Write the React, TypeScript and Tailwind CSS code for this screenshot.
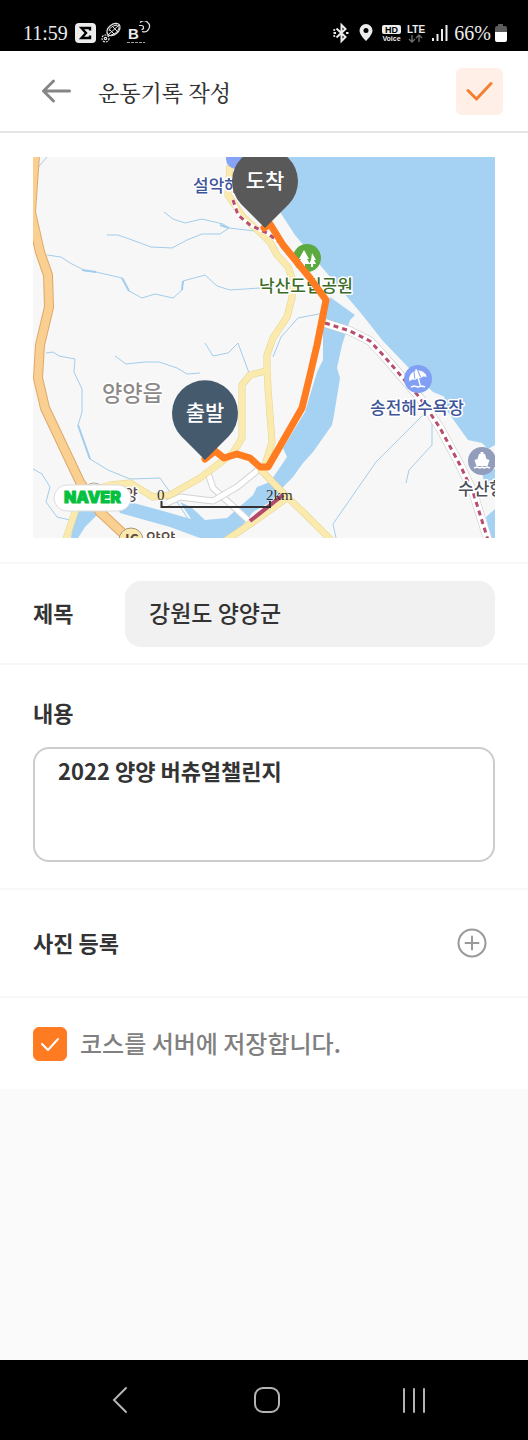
import { useState } from "react";

const SERIF = "font-['Liberation_Serif','Noto_Serif_CJK_KR','Noto_Sans_CJK_KR',serif]";

function StatusBar() {
  return (
    <div className={`flex h-[51px] shrink-0 items-center justify-between bg-black pt-[15px] pl-[23px] pr-[21px] text-[#ececec] ${SERIF}`}>
      <div className="flex items-center">
        <span className="text-[20px] leading-6">11:59</span>
        <svg width="76" height="24" viewBox="0 0 76 24" className="ml-[7px]" aria-hidden="true">
          <rect x="0" y="2" width="21" height="20" rx="4" fill="#ececec" />
          <path d="M15 9.500V7H6.500l4.500 5-4.500 5H15v-2.500" fill="none" stroke="#000" strokeWidth="2.400" />
          <g fill="none" stroke="#e4e4e4" strokeWidth="1.200">
            <ellipse cx="38.500" cy="8.500" rx="7.500" ry="5" transform="rotate(-40 38.500 8.500)" />
            <path d="M33 14 44 4M35 9l5 5M38 6l5 5M41 3.500l4 4M34 10q1-5 8-6M36 14q6-1 8-7" strokeWidth="1" />
            <circle cx="30.500" cy="17.500" r="3.500" strokeDasharray="2 1" />
            <circle cx="30.500" cy="17.500" r="1.200" />
            <path d="M65 1.500a5.500 5.500 0 1 1 2 9" />
            <path d="M64 4.500h2.500a2 2 0 0 1 0 4" />
            <path d="M52 21.500h18" strokeDasharray="3 1" opacity=".7" />
          </g>
          <text x="53" y="17.500" fontSize="15" fontWeight="700" fill="#ececec" fontFamily="Liberation Sans, sans-serif">B</text>
        </svg>
      </div>
      <div className="flex items-center">
        <svg width="118" height="24" viewBox="0 0 118 24" aria-hidden="true">
          <g fill="none" stroke="#ececec" strokeWidth="2">
            <path d="m4.500 7.500 9 8.500-4 4V4l4 4-9 8.500" />
            <path d="M1.500 12h2.500M14 12h2.500M1.500 8.500l1.500 1M1.500 15.500l1.500-1" />
          </g>
          <path fillRule="evenodd" d="M34 3a6.500 6.500 0 0 0-6.500 6.500C27.500 14 34 20 34 20s6.500-6 6.500-10.500A6.500 6.500 0 0 0 34 3Zm0 4a2.500 2.500 0 1 1 0 5 2.500 2.500 0 0 1 0-5Z" fill="#ececec" />
          <rect x="50" y="4" width="19" height="9" rx="2" fill="#ececec" />
          <g fontFamily="Liberation Sans, sans-serif" fontWeight="700" textAnchor="middle">
            <text x="59.500" y="11.500" fontSize="9" fill="#000">HD</text>
            <text x="59.500" y="20" fontSize="7" fill="#ececec">Voice</text>
            <text x="84" y="11.500" fontSize="10" fill="#ececec">LTE</text>
          </g>
          <g fill="none" stroke="#6a6a6a" strokeWidth="1.400">
            <path d="M80 14v7m-3-3 3 3 3-3M87 21v-7m-3 3 3-3 3 3" />
          </g>
          <path d="M101 20v-3M105.500 20v-7M110 20V8M114.500 20V4" stroke="#ececec" strokeWidth="2" />
        </svg>
        <span className="ml-1 text-[20px] leading-6">66%</span>
        <svg width="12" height="18" viewBox="0 0 12 18" className="ml-1" aria-hidden="true">
          <path d="M3 2V0h5v2h2a2 2 0 0 1 2 2v5H0V4a2 2 0 0 1 2-2Z" fill="#5c5c5c" />
          <path d="M0 8h12v8a2 2 0 0 1-2 2H2a2 2 0 0 1-2-2Z" fill="#fff" />
        </svg>
      </div>
    </div>
  );
}

function Header() {
  return (
    <header className="flex h-[82px] shrink-0 items-center border-b-2 border-[#e5e5e5] pl-[41px] pr-[25px]">
      <button type="button" aria-label="뒤로">
        <svg width="31" height="26" viewBox="0 0 31 26" fill="none" stroke="#868686" strokeWidth="3" strokeLinecap="round" strokeLinejoin="round">
          <path d="M28.500 13H2.500M12.500 3 2.500 13l10 10" />
        </svg>
      </button>
      <h1 className="ml-[26px] flex-1 pt-0.5 font-['Noto_Serif_CJK_KR','Noto_Sans_CJK_KR',serif] text-[22px] leading-8 font-medium text-[#333]">
        운동기록 작성
      </h1>
      <button type="button" aria-label="저장" className="flex size-[47px] items-center justify-center rounded-md bg-[#ffefe6]">
        <svg width="27" height="20" viewBox="0 0 27 20" fill="none" stroke="#f47f30" strokeWidth="3" strokeLinecap="round" strokeLinejoin="round">
          <path d="m2 9.500 8.500 8.500L25 2.500" />
        </svg>
      </button>
    </header>
  );
}

const YELLOW_ROADS = [
  "M197 8 195 38 210 60 232 80 237 85 244 98 255 110 259 121V141L254 160 240 181 234 198V210L235 231 239 285 232 308",
  "M237 213 217 218 209 228V281L200 296 167 321 137 338 120 340 97 326 77 328 52 335 42 355 32 385",
  "M227 312 254 340 270 355 299 384",
  "M192 384 220 365 254 341",
];

const WHITE_ROADS = [
  "M174 313 180 331 215 363",
  "M134 346 147 340 180 344 204 330 225 313",
];

const STREAMS = [
  "M131 55 140 62 152 66 169 62 190 67 196 71 222 74",
  "M74 78 85 78 102 84 118 90 139 91 154 83 169 77 187 77 196 71",
  "M14 98 28 100 37 106 53 114 63 115 89 121 96 134 109 141 122 137 140 141 149 133 150 124 172 118 184 129 197 133 227 131",
  "M1 15 14 0M172 186 180 199 195 196 205 186 216 216",
  "M13 196 20 195 26 199 42 202 41 215 49 232V255L45 268 57 302 75 313 97 322 127 321 144 345 157 365",
  "M82 199 93 207 112 205 126 205 144 211 154 217 167 216",
  "M0 312 9 317 17 330 13 345 24 360 37 363",
  "M291 156 265 161 248 180 240 200",
  "M391 257 343 305 300 367 303 381M399 252V288L376 313 373 326",
];

const COAST_RAIL = "M292 166 317 174 337 184 350 198 369 220 387 241 407 271 427 308 440 335 455 383";
const NORTH_RAIL = "M200 43 205 58 217 68 234 76 250 88";
const HIGHWAY = "M2-2-2 55 7 95 15 118 16 150 7 188 5 221 12 251 47 325 67 355 97 383";

type PinProps = { x: number; y: number; label: string; fill: string };

function Pin({ x, y, label, fill }: PinProps) {
  return (
    <g transform={`translate(${x} ${y})`}>
      <path d="M0 47-24 23A33 33 0 1 1 24 23Z" fill={fill} />
      <text y="7" textAnchor="middle" fontSize="21" fontWeight="500" fill="#fff">{label}</text>
    </g>
  );
}

function CourseMap() {
  return (
    <svg viewBox="0 0 462 381" className="block w-full" role="img" aria-label="코스 지도" fontFamily="Noto Sans CJK KR, sans-serif">
      <rect width="462" height="381" fill="#f7f7f7" />

      {/* sea and river */}
      <g fill="#a5d2f3">
        <path d="M232 0 247 55 262 78 287 108 327 155 350 184 374 209 400 235 412 240 407 244 435 283 449 286 455 292 462 288V0Z" />
        <path d="M449 316 462 312V332L452 328ZM453 360 462 352V381H458Z" />
        <path d="M297 140 322 158 317 163 309 188 304 211 307 221 301 258 299 268 280 295 270 306 260 320 252 328 237 345 220 355 200 381H167L137 370 87 356 80 340 97 345 130 354 158 362 147 345 158 350 172 363 194 361 220 338 224 330 237 325 254 300 250 291 272 255 284 215 290 203V165Z" />
        <path d="M42 354 60 350 70 352 52 370 45 381H38Z" />
      </g>
      <g fill="none" stroke="#a3cdeb" strokeLinejoin="round">
        {STREAMS.map((d) => (
          <path key={d} d={d} />
        ))}
        <path d="M49 113 63 115M89 121 96 134M149 133 150 124M45 268 57 302M187 68 196 71" strokeWidth="2" />
      </g>

      {/* roads */}
      <g fill="none" strokeLinejoin="round">
        {WHITE_ROADS.map((d) => (
          <g key={d}>
            <path d={d} stroke="#d3d3d3" strokeWidth="7" />
            <path d={d} stroke="#fff" strokeWidth="5" />
          </g>
        ))}
        {YELLOW_ROADS.map((d) => (
          <path key={d} d={d} stroke="#e6d493" strokeWidth="7" />
        ))}
        {YELLOW_ROADS.map((d) => (
          <path key={d} d={d} stroke="#fbeaae" strokeWidth="6" />
        ))}
        <path d="M217 364 250 338" stroke="#b34a6c" strokeWidth="4" />
        <path d={HIGHWAY} stroke="#dfa868" strokeWidth="10" />
        <path d={HIGHWAY} stroke="#f9d091" strokeWidth="8" />
        <path d={COAST_RAIL} stroke="#c8c8c8" strokeWidth="9" />
        <path d={COAST_RAIL} stroke="#fff" strokeWidth="8" />
        <path d={COAST_RAIL} stroke="#b84d6d" strokeWidth="3" strokeDasharray="5 4" />
        <path d={NORTH_RAIL} stroke="#fff" strokeWidth="4" />
        <path d={NORTH_RAIL} stroke="#b84d6d" strokeWidth="3" strokeDasharray="5 4" />
      </g>

      {/* places under the route */}
      <circle cx="203" cy="2" r="10" fill="#86a4f5" />
      <circle cx="274" cy="101" r="14" fill="#5caa41" />
      <path d="m271 93 5 9h-2l3 5h-5v3h-2v-3h-5l3-5h-2ZM279 96l4 7h-2l2 4h-3v3h-2v-3h-2l2-4Z" fill="#fff" />
      <circle cx="385" cy="222" r="14" fill="#819ff4" />
      <g transform="rotate(-15 385 222)">
        <path d="M376 222a9 8.500 0 0 1 18 0l-3.500-1-3 1-2.500-1-2.500 1-3-1Z" fill="#fff" />
        <path d="m383 214-1 7M387 214l1 7" stroke="#819ff4" />
        <path d="M385.500 212v17" stroke="#fff" strokeWidth="1.500" />
      </g>
      <path d="m378 230 3-1 4 1 4-1 3 1" fill="none" stroke="#fff" strokeWidth="1.500" />
      <circle cx="449" cy="304" r="14" fill="#929dbb" />
      <path d="M446 297h1.500v-2h3v2h1.500l1.500 5 3 1-2 6h-11l-2-6 3-1Z" fill="#fff" />
      <path d="m441 311 3-1 3 1 2-1 2 1 3-1 3 1" fill="none" stroke="#fff" strokeWidth="1.500" />
      <circle cx="98" cy="383" r="12" fill="#fbeaae" stroke="#a8957b" />
      <circle cx="61" cy="337" r="11" fill="#eee" stroke="#b5a89c" />
      <g stroke="#fff" strokeWidth="3" paintOrder="stroke" strokeLinejoin="round" fontWeight="500">
        <text x="160" y="35" fontSize="17" fill="#40549a">설악해</text>
        <text x="226" y="135" fontSize="17" fill="#3a6c28">낙산도립공원</text>
        <text x="337" y="257" fontSize="17" fill="#40549a">송전해수욕장</text>
        <text x="425" y="338" fontSize="17" fill="#4b4f5a">수산항</text>
        <text x="69" y="244" fontSize="22" fill="#8d8988">양양읍</text>
        <text x="91" y="343" fontSize="15" fill="#5a4a42">양</text>
        <text x="113" y="388" fontSize="16" fill="#5a4a42">양양</text>
      </g>
      <text x="92" y="388" fontSize="14" fill="#5a4a42" fontWeight="700">IC</text>

      {/* recorded course */}
      <path
        d="M172 302 182 294 191 301 204 297 217 301 227 310H235L269 251 277 218 284 188 293 143 277 121 250 88 237 67 231 71"
        fill="none"
        stroke="#ff7c20"
        strokeWidth="7"
        strokeLinecap="round"
        strokeLinejoin="round"
      />
      <Pin x={232} y={24} label="도착" fill="#595959" />
      <Pin x={172} y={256} label="출발" fill="#455a6d" />

      {/* provider logo and scale */}
      <rect x="21" y="328" width="77" height="26" rx="13" fill="#fff" stroke="#ddd" />
      <text x="31" y="346" fontSize="16" fontWeight="900" fill="#03c13f" stroke="#03c13f" fontFamily="Inter, sans-serif">NAVER</text>
      <path d="M128.500 344v6H237v-6" fill="none" stroke="#333" strokeWidth="2" />
      <g fontFamily="Liberation Serif, serif" fontSize="15" fill="#333">
        <text x="124" y="343">0</text>
        <text x="233" y="343">2km</text>
      </g>
    </svg>
  );
}

export default function App() {
  const [title, setTitle] = useState("강원도 양양군");
  const [content, setContent] = useState("2022 양양 버츄얼챌린지");
  const [saveCourse, setSaveCourse] = useState(true);

  return (
    <div className="flex min-h-screen flex-col bg-[#fafafa] font-['Noto_Sans_CJK_KR',sans-serif] text-[#333]">
      <StatusBar />

      <main className="bg-white">
        <Header />

        <div className="border-b-2 border-[#f8f8f8] px-[33px] py-6">
          <CourseMap />
        </div>

        <div className="flex items-center border-b-2 border-[#f8f8f8] px-[33px] pt-[17px] pb-4">
          <label htmlFor="title" className="w-[92px] pb-1 text-[22px] leading-8 font-bold">제목</label>
          <input
            id="title"
            value={title}
            onChange={(e) => setTitle(e.target.value)}
            className="h-[66px] min-w-0 flex-1 rounded-2xl bg-[#f1f1f1] px-6 pb-1 text-[23px] font-medium outline-none"
          />
        </div>

        <div className="border-b-2 border-[#f8f8f8] px-[33px] pt-[31px] pb-[26px]">
          <label htmlFor="content" className="block text-[22px] leading-8 font-bold">내용</label>
          <textarea
            id="content"
            value={content}
            onChange={(e) => setContent(e.target.value)}
            className="mt-[19px] block h-[115px] w-full resize-none rounded-2xl border-2 border-[#ccc] px-[23px] py-[5px] text-[22px] leading-8 font-bold outline-none"
          />
        </div>

        <div className="flex h-[108px] items-center justify-between border-b-2 border-[#f8f8f8] pl-[33px] pr-[41px]">
          <h2 className="pb-0.5 text-[22px] leading-8 font-bold">사진 등록</h2>
          <button type="button" aria-label="사진 추가">
            <svg width="30" height="30" viewBox="0 0 30 30" fill="none" stroke="#999" strokeWidth="2">
              <circle cx="15" cy="15" r="13.500" />
              <path d="M15 8.500v13M8.500 15h13" strokeLinecap="round" />
            </svg>
          </button>
        </div>

        <label className="flex h-[91px] items-center gap-[13px] px-[33px]">
          <span className="grid size-[34px] shrink-0 place-items-center">
            <input
              type="checkbox"
              checked={saveCourse}
              onChange={(e) => setSaveCourse(e.target.checked)}
              className="col-start-1 row-start-1 size-[34px] appearance-none rounded-md border border-[#ccc] checked:border-[#ff7b22] checked:bg-[#ff7b22]"
            />
            {saveCourse && (
              <svg width="20" height="16" viewBox="0 0 20 16" className="pointer-events-none col-start-1 row-start-1" fill="none" stroke="#fff" strokeWidth="2" strokeLinecap="round" strokeLinejoin="round">
                <path d="m2 8 6 6L18 3" />
              </svg>
            )}
          </span>
          <span className="pb-0.5 text-2xl font-medium text-[#808080]">코스를 서버에 저장합니다.</span>
        </label>
      </main>

      <nav className="mt-auto grid h-20 grid-cols-3 items-center bg-black pr-[41px] pl-[47px]">
        <button type="button" aria-label="이전" className="flex justify-center">
          <svg width="16" height="28" viewBox="0 0 16 28" fill="none" stroke="#b4b4b4" strokeWidth="2" strokeLinecap="round">
            <path d="M14 2 2 14l12 12" />
          </svg>
        </button>
        <button type="button" aria-label="홈" className="flex justify-center">
          <svg width="28" height="28" viewBox="0 0 28 28" fill="none" stroke="#b4b4b4" strokeWidth="2">
            <rect x="2" y="2" width="24" height="24" rx="8" />
          </svg>
        </button>
        <button type="button" aria-label="최근 앱" className="flex justify-center">
          <svg width="26" height="28" viewBox="0 0 26 28" fill="none" stroke="#b4b4b4" strokeWidth="2" strokeLinecap="round">
            <path d="M3 3v23M13 3v23M23 3v23" />
          </svg>
        </button>
      </nav>
    </div>
  );
}
